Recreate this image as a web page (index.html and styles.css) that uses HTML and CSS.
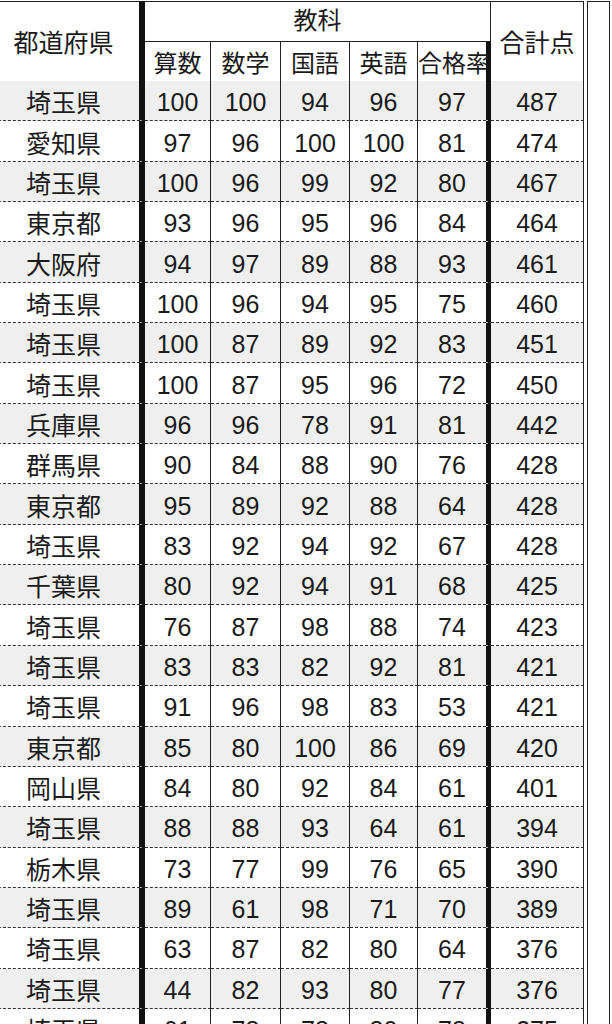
FILE: index.html
```html
<!DOCTYPE html>
<html lang="ja">
<head>
<meta charset="utf-8">
<title>都道府県別 成績表</title>
<link rel="stylesheet" href="styles.css">
</head>
<body>
<div class="wrap">
<table class="score">
<colgroup>
<col class="w-pref"><col class="w-a"><col class="w-b"><col class="w-c"><col class="w-d"><col class="w-e"><col class="w-total">
</colgroup>
<thead>
<tr class="h1">
<th rowspan="2" class="pref top">都道府県</th>
<th colspan="5" class="group top">教科</th>
<th rowspan="2" class="total top">合計点</th>
</tr>
<tr class="h2">
<th>算数</th><th>数学</th><th>国語</th><th>英語</th><th class="rate">合格率</th>
</tr>
</thead>
<tbody>
<tr><td class="pref">埼玉県</td><td>100</td><td>100</td><td>94</td><td>96</td><td class="rate">97</td><td class="total">487</td></tr>
<tr><td class="pref">愛知県</td><td>97</td><td>96</td><td>100</td><td>100</td><td class="rate">81</td><td class="total">474</td></tr>
<tr><td class="pref">埼玉県</td><td>100</td><td>96</td><td>99</td><td>92</td><td class="rate">80</td><td class="total">467</td></tr>
<tr><td class="pref">東京都</td><td>93</td><td>96</td><td>95</td><td>96</td><td class="rate">84</td><td class="total">464</td></tr>
<tr><td class="pref">大阪府</td><td>94</td><td>97</td><td>89</td><td>88</td><td class="rate">93</td><td class="total">461</td></tr>
<tr><td class="pref">埼玉県</td><td>100</td><td>96</td><td>94</td><td>95</td><td class="rate">75</td><td class="total">460</td></tr>
<tr><td class="pref">埼玉県</td><td>100</td><td>87</td><td>89</td><td>92</td><td class="rate">83</td><td class="total">451</td></tr>
<tr><td class="pref">埼玉県</td><td>100</td><td>87</td><td>95</td><td>96</td><td class="rate">72</td><td class="total">450</td></tr>
<tr><td class="pref">兵庫県</td><td>96</td><td>96</td><td>78</td><td>91</td><td class="rate">81</td><td class="total">442</td></tr>
<tr><td class="pref">群馬県</td><td>90</td><td>84</td><td>88</td><td>90</td><td class="rate">76</td><td class="total">428</td></tr>
<tr><td class="pref">東京都</td><td>95</td><td>89</td><td>92</td><td>88</td><td class="rate">64</td><td class="total">428</td></tr>
<tr><td class="pref">埼玉県</td><td>83</td><td>92</td><td>94</td><td>92</td><td class="rate">67</td><td class="total">428</td></tr>
<tr><td class="pref">千葉県</td><td>80</td><td>92</td><td>94</td><td>91</td><td class="rate">68</td><td class="total">425</td></tr>
<tr><td class="pref">埼玉県</td><td>76</td><td>87</td><td>98</td><td>88</td><td class="rate">74</td><td class="total">423</td></tr>
<tr><td class="pref">埼玉県</td><td>83</td><td>83</td><td>82</td><td>92</td><td class="rate">81</td><td class="total">421</td></tr>
<tr><td class="pref">埼玉県</td><td>91</td><td>96</td><td>98</td><td>83</td><td class="rate">53</td><td class="total">421</td></tr>
<tr><td class="pref">東京都</td><td>85</td><td>80</td><td>100</td><td>86</td><td class="rate">69</td><td class="total">420</td></tr>
<tr><td class="pref">岡山県</td><td>84</td><td>80</td><td>92</td><td>84</td><td class="rate">61</td><td class="total">401</td></tr>
<tr><td class="pref">埼玉県</td><td>88</td><td>88</td><td>93</td><td>64</td><td class="rate">61</td><td class="total">394</td></tr>
<tr><td class="pref">栃木県</td><td>73</td><td>77</td><td>99</td><td>76</td><td class="rate">65</td><td class="total">390</td></tr>
<tr><td class="pref">埼玉県</td><td>89</td><td>61</td><td>98</td><td>71</td><td class="rate">70</td><td class="total">389</td></tr>
<tr><td class="pref">埼玉県</td><td>63</td><td>87</td><td>82</td><td>80</td><td class="rate">64</td><td class="total">376</td></tr>
<tr><td class="pref">埼玉県</td><td>44</td><td>82</td><td>93</td><td>80</td><td class="rate">77</td><td class="total">376</td></tr>
<tr><td class="pref">埼玉県</td><td>61</td><td>78</td><td>78</td><td>80</td><td class="rate">78</td><td class="total">375</td></tr>
<tr><td class="pref">千葉県</td><td>70</td><td>80</td><td>75</td><td>82</td><td class="rate">66</td><td class="total">373</td></tr>
</tbody>
</table>
<div class="strip"></div>
</div>
</body>
</html>
```
FILE: styles.css
```css
html, body {
  margin: 0;
  padding: 0;
  background: #fff;
  overflow: hidden;
}

.wrap {
  display: flex;
  align-items: stretch;
  margin-left: -12px;
  padding-top: 1px;
  height: 1100px;
}

.score {
  border-collapse: separate;
  border-spacing: 0;
  table-layout: fixed;
  width: 596px;
  font-family: "Liberation Sans", "Noto Sans CJK JP", sans-serif;
  font-size: 25px;
  color: #1a1a1a;
  align-self: flex-start;
}

.w-pref { width: 157px; }
.w-a { width: 66px; }
.w-b { width: 70px; }
.w-c { width: 69px; }
.w-d { width: 68px; }
.w-e { width: 73px; }
.w-total { width: 93px; }

.score th,
.score td {
  box-sizing: border-box;
  padding: 0;
  text-align: center;
  font-weight: normal;
  border-right: 1px solid #222;
  white-space: nowrap;
  overflow: visible;
  line-height: 1;
}

.score th {
  font-family: "Noto Sans CJK JP", "Liberation Sans", sans-serif;
  font-size: 24px;
  background: #fff;
}

.score .top {
  border-top: 1px solid #222;
}

.h1 th {
  height: 41px;
}

.h1 .group {
  border-bottom: 1px solid #222;
  padding-bottom: 6px;
  vertical-align: middle;
}

.h2 th {
  height: 39px;
  padding-top: 1px;
}

.h1 .pref,
.h1 .total {
  font-size: 25px;
  padding-top: 0;
}

.score .pref {
  border-right: 6px solid #111;
}

.score .rate {
  border-right: 5px solid #111;
}

.score td {
  height: 40.35px;
  border-bottom: 1px dashed #333;
  padding-top: 4px;
}

.score td.pref {
  font-family: "Noto Sans CJK JP", "Liberation Sans", sans-serif;
  font-size: 25px;
  padding-top: 2px;
}

.score tbody tr:nth-child(odd) td {
  background: #efefef;
}

.strip {
  width: 23px;
  box-sizing: border-box;
  margin-left: 3px;
  border-left: 1px solid #222;
  border-right: 1px solid #222;
  border-top: 1px solid #222;
}
```
